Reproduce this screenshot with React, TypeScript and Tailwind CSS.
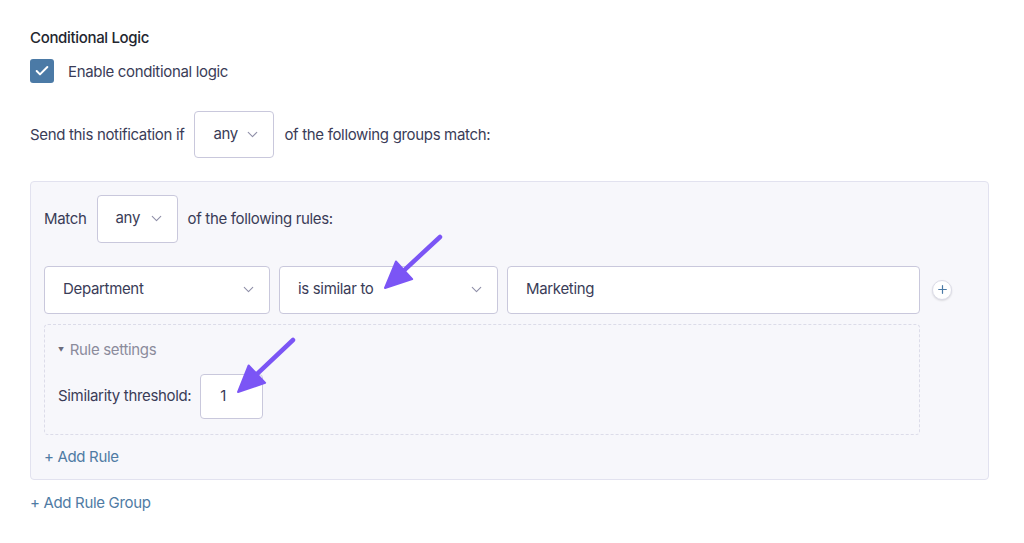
import { ChevronDown, Check, Plus } from "lucide-react"

function SelectBox({ value, className }: { value: string; className: string }) {
  return (
    <div className={`flex items-center justify-between bg-white border border-[#c9c8dc] rounded-[4px] ${className}`}>
      <span>{value}</span>
      <ChevronDown size={17} strokeWidth={1.5} className="text-[#8f8fa8]" />
    </div>
  )
}

function Arrow({ className, x1, y1, x2, y2 }: { className: string; x1: number; y1: number; x2: number; y2: number }) {
  // arrow drawn from tail (x1,y1) to tip (x2,y2)
  const dx = x2 - x1
  const dy = y2 - y1
  const len = Math.sqrt(dx * dx + dy * dy)
  const ux = dx / len
  const uy = dy / len
  const bx = x2 - ux * 26
  const by = y2 - uy * 26
  const px = -uy * 12
  const py = ux * 12
  return (
    <svg className={`absolute pointer-events-none ${className}`} width="80" height="80" viewBox="0 0 80 80">
      <line x1={x1} y1={y1} x2={bx + ux * 4} y2={by + uy * 4} stroke="#7b55f5" strokeWidth="4.5" strokeLinecap="round" />
      <polygon points={`${x2},${y2} ${bx + px},${by + py} ${bx - px},${by - py}`} fill="#7b55f5" stroke="#7b55f5" strokeWidth="2" strokeLinejoin="round" />
    </svg>
  )
}

export default function App() {
  return (
    <div className="relative w-[1024px] h-[543px] bg-white text-[15px] tracking-[-0.022em] text-[#3a3c57] font-['Inter',sans-serif] pl-[30px] pt-[29px]">
      <h2 className="text-[15px] font-medium text-[#23262f] leading-[18px]">Conditional Logic</h2>

      <label className="flex items-center gap-[14px] mt-[12px]">
        <span className="w-[24px] h-[24px] rounded-[3px] bg-[#4b7aa6] flex items-center justify-center">
          <Check size={16} strokeWidth={3} className="text-white" />
        </span>
        <span className="pt-[2px]">Enable conditional logic</span>
      </label>

      <div className="flex items-center gap-[10px] mt-[27px]">
        <span className="pt-[3px]">Send this notification if</span>
        <SelectBox value="any" className="w-[80px] h-[47px] pl-[18px] pr-[12px]" />
        <span className="pt-[3px]">of the following groups match:</span>
      </div>

      <div className="w-[959px] mt-[23px] bg-[#f7f7fb] border border-[#e2e2ef] rounded-[4px] px-[13px] pt-[13px] pb-[13px]">
        <div className="flex items-center gap-[10px]">
          <span className="pt-[1px]">Match</span>
          <SelectBox value="any" className="w-[81px] h-[48px] pl-[18px] pr-[12px]" />
          <span className="pt-[1px]">of the following rules:</span>
        </div>

        <div className="flex items-center gap-[9px] mt-[23px]">
          <SelectBox value="Department" className="w-[226px] h-[48px] pl-[18px] pr-[12px]" />
          <SelectBox value="is similar to" className="w-[219px] h-[48px] pl-[18px] pr-[12px]" />
          <div className="w-[413px] h-[48px] flex items-center bg-white border border-[#c9c8dc] rounded-[4px] pl-[18px]">
            Marketing
          </div>
          <button className="ml-[3px] w-[20px] h-[20px] rounded-full bg-white border border-[#dcdce8] shadow-[0_1px_2px_rgba(0,0,0,0.12)] flex items-center justify-center">
            <Plus size={13} strokeWidth={2.2} className="text-[#4b7aa6]" />
          </button>
        </div>

        <div className="w-[876px] mt-[10px] border border-dashed border-[#dcdce9] rounded-[4px] pl-[13px] pt-[15px] pb-[15px]">
          <div className="flex items-center gap-[6px] text-[#8b8b9b] leading-[20px]">
            <span className="text-[6px] text-[#6b6b7b]">▼</span>
            <span>Rule settings</span>
          </div>
          <div className="flex items-center gap-[9px] mt-[14px]">
            <span>Similarity threshold:</span>
            <div className="w-[63px] h-[45px] bg-white border border-[#c9c8dc] rounded-[4px] flex items-center pl-[19px]">1</div>
          </div>
        </div>

        <div className="mt-[13px] text-[#4f7ba4] leading-[18px]">+ Add Rule</div>
      </div>

      <div className="mt-[14px] text-[#4f7ba4] leading-[18px]">+ Add Rule Group</div>

      <Arrow className="left-[370px] top-[225px]" x1={70} y1={12} x2={15} y2={63} />
      <Arrow className="left-[230px] top-[330px]" x1={63} y1={10} x2={8} y2={62} />
    </div>
  )
}
